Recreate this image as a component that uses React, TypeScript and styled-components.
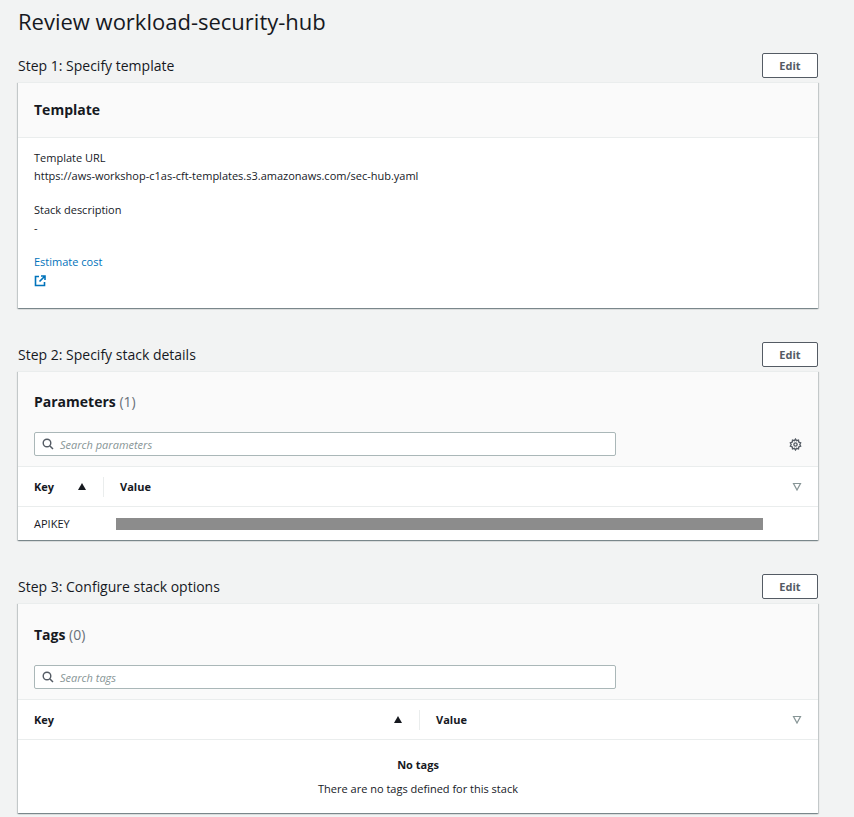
import React from "react";
import styled, { createGlobalStyle } from "styled-components";

const Global = createGlobalStyle`
  *, *::before, *::after { box-sizing: border-box; }
  body { margin: 0; background: #f2f3f3; font-family: "Open Sans", "Noto Sans", Arial, sans-serif; color: #16191f; }
`;

const Page = styled.div`
  padding: 6px 36px 12px 18px;
`;
const Title = styled.h1`
  font-size: 22px; font-weight: 400; margin: 0 0 17px; line-height: 30px;
`;
const Section = styled.section`
  margin-bottom: 34px;
`;
const StepHead = styled.div`
  display: flex; justify-content: space-between; align-items: center; height: 30px; margin-bottom: -1px;
`;
const StepTitle = styled.h2`
  font-size: 14px; font-weight: 400; margin: 0 0 5px;
`;
const EditBtn = styled.button`
  width: 56px; height: 25px; border: 1px solid #545b64; background: #fff; border-radius: 2px;
  font: 700 11px "Open Sans", Arial, sans-serif; color: #545b64; margin-bottom: 5px;
`;
const Panel = styled.div`
  background: #fff; border-top: 1px solid #eaeded;
  box-shadow: 0 1px 1px 0 rgba(0,28,36,.3), 1px 1px 1px 0 rgba(0,28,36,.15), -1px 1px 1px 0 rgba(0,28,36,.15);
`;
const PanelHead = styled.div<{ $h: number }>`
  background: #fafafa; padding: 0 16px; height: ${p => p.$h}px; display: flex; flex-direction: column;
  border-bottom: 1px solid #eaeded;
`;
const PanelTitle = styled.div<{ $top: number }>`
  font-size: 14px; font-weight: 700; margin-top: ${p => p.$top}px; line-height: 20px;
  span { font-weight: 400; color: #687078; }
`;
const Body = styled.div`
  padding: 11px 16px 16px; font-size: 11px; line-height: 18px;
`;
const Label = styled.div` color: #16191f; `;
const Value = styled.div` margin-bottom: 16px; `;
const Link = styled.div` color: #0073bb; `;
const SearchRow = styled.div`
  display: flex; align-items: center; justify-content: space-between; margin-top: 20px;
`;
const Search = styled.div`
  width: 582px; height: 24px; border: 1px solid #aab7b8; background: #fff; border-radius: 2px;
  display: flex; align-items: center; gap: 6px; padding-left: 7px;
  font-size: 11px; font-style: italic; color: #879596;
`;
const HeadRow = styled.div<{ $split: number }>`
  display: grid; grid-template-columns: ${p => p.$split}px 1fr; height: 40px; align-items: center;
  border-bottom: 1px solid #eaeded; font-size: 11px; font-weight: 700;
`;
const Cell = styled.div<{ $divider?: boolean }>`
  display: flex; align-items: center; justify-content: space-between; padding: 0 16px;
  ${p => p.$divider ? "border-left: 1px solid #eaeded; height: 20px;" : ""}
`;
const Row = styled.div`
  display: flex; align-items: center; height: 33px; padding: 0 16px; font-size: 11px;
`;
const Bar = styled.div`
  margin-left: 46px; width: 647px; height: 12px; background: #8c8c8c;
`;
const Empty = styled.div`
  text-align: center; padding: 13px 0 12px; font-size: 11px; line-height: 24px;
  b { display: block; }
`;

const Tri = ({ filled }: { filled?: boolean }) => (
  <svg width="10" height="9" viewBox="0 0 10 9">
    {filled ? <path d="M5 1L9 8H1z" fill="#16191f" /> : <path d="M1.5 1.5h7L5 8z" fill="none" stroke="#879596" strokeWidth="1.2" />}
  </svg>
);
const SearchIcon = () => (
  <svg width="12" height="12" viewBox="0 0 12 12"><circle cx="5" cy="5" r="3.8" fill="none" stroke="#545b64" strokeWidth="1.4" /><path d="M8 8l3 3" stroke="#545b64" strokeWidth="1.5" /></svg>
);
const Gear = () => (
  <svg width="13" height="13" viewBox="0 0 24 24" fill="none" stroke="#545b64" strokeWidth="2.5">
    <circle cx="12" cy="12" r="3" />
    <path d="M12 2l2 3 3.5-1 .5 3.5 3.5 1.5-1.5 3 1.5 3-3.5 1.5-.5 3.5-3.5-1-2 3-2-3-3.5 1-.5-3.5L2.5 15l1.5-3-1.5-3 3.5-1.5.5-3.5 3.5 1z" />
  </svg>
);
const Ext = () => (
  <svg width="12" height="12" viewBox="0 0 12 12" fill="none" stroke="#0073bb" strokeWidth="1.6" style={{ marginTop: 4 }}>
    <path d="M5 1.5H1.5v9h9V7" /><path d="M7 1h4v4M11 1L5.5 6.5" />
  </svg>
);

export default function App() {
  return (
    <Page>
      <Global />
      <Title>Review workload-security-hub</Title>
      <Section>
        <StepHead><StepTitle>Step 1: Specify template</StepTitle><EditBtn>Edit</EditBtn></StepHead>
        <Panel>
          <PanelHead $h={55}><PanelTitle $top={17}>Template</PanelTitle></PanelHead>
          <Body>
            <Label>Template URL</Label>
            <Value>https://aws-workshop-c1as-cft-templates.s3.amazonaws.com/sec-hub.yaml</Value>
            <Label>Stack description</Label>
            <Value>-</Value>
            <Link>Estimate cost</Link>
            <Link><Ext /></Link>
          </Body>
        </Panel>
      </Section>
      <Section>
        <StepHead><StepTitle>Step 2: Specify stack details</StepTitle><EditBtn>Edit</EditBtn></StepHead>
        <Panel>
          <PanelHead $h={95}>
            <PanelTitle $top={20}>Parameters <span>(1)</span></PanelTitle>
            <SearchRow><Search><SearchIcon />Search parameters</Search><Gear /></SearchRow>
          </PanelHead>
          <HeadRow $split={85}>
            <Cell>Key <Tri filled /></Cell>
            <Cell $divider>Value <Tri /></Cell>
          </HeadRow>
          <Row>APIKEY<Bar /></Row>
        </Panel>
      </Section>
      <Section>
        <StepHead><StepTitle>Step 3: Configure stack options</StepTitle><EditBtn>Edit</EditBtn></StepHead>
        <Panel>
          <PanelHead $h={96}>
            <PanelTitle $top={21}>Tags <span>(0)</span></PanelTitle>
            <SearchRow><Search><SearchIcon />Search tags</Search></SearchRow>
          </PanelHead>
          <HeadRow $split={401}>
            <Cell>Key <Tri filled /></Cell>
            <Cell $divider>Value <Tri /></Cell>
          </HeadRow>
          <Empty><b>No tags</b>There are no tags defined for this stack</Empty>
        </Panel>
      </Section>
    </Page>
  );
}
